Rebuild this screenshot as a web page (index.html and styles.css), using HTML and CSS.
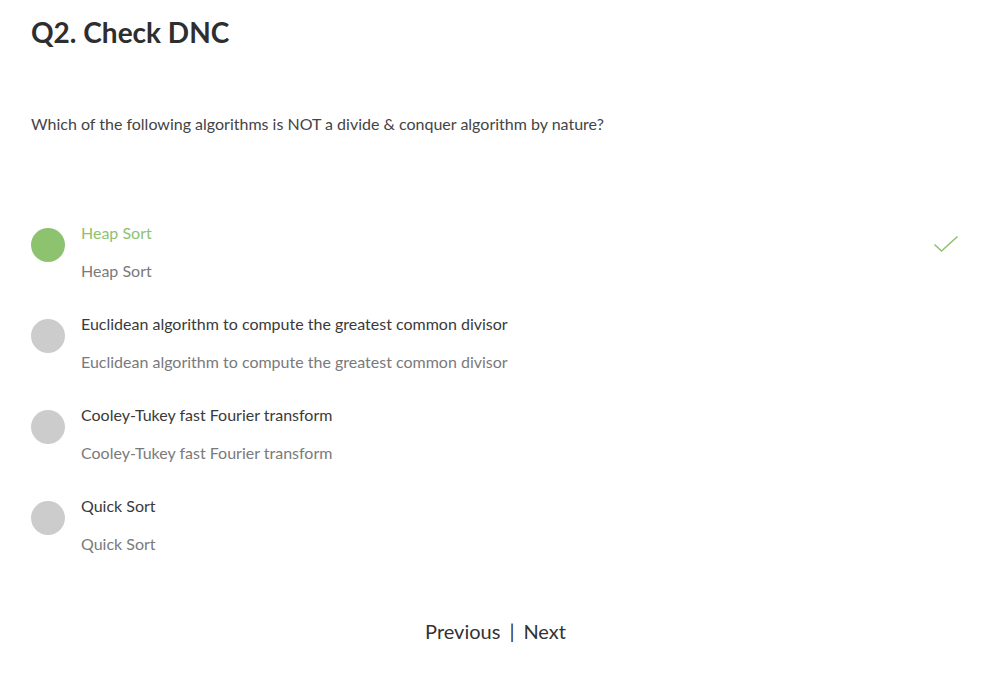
FILE: index.html
```html
<!DOCTYPE html>
<html>
<head>
<meta charset="utf-8">
<link rel="stylesheet" href="styles.css">
</head>
<body>
<div class="page">
  <h1 class="title">Q2. Check DNC</h1>
  <p class="question">Which of the following algorithms is NOT a divide &amp; conquer algorithm by nature?</p>
  <ul class="options">
    <li class="option correct">
      <span class="dot"></span>
      <div class="text">
        <div class="label">Heap Sort</div>
        <div class="sub">Heap Sort</div>
      </div>
      <svg class="check" width="26" height="18" viewBox="0 0 26 18"><path d="M1.5 9.5 L8.5 16 L24.5 1.5" fill="none" stroke="#8dc26f" stroke-width="1.6"/></svg>
    </li>
    <li class="option">
      <span class="dot"></span>
      <div class="text">
        <div class="label">Euclidean algorithm to compute the greatest common divisor</div>
        <div class="sub">Euclidean algorithm to compute the greatest common divisor</div>
      </div>
    </li>
    <li class="option">
      <span class="dot"></span>
      <div class="text">
        <div class="label">Cooley-Tukey fast Fourier transform</div>
        <div class="sub">Cooley-Tukey fast Fourier transform</div>
      </div>
    </li>
    <li class="option">
      <span class="dot"></span>
      <div class="text">
        <div class="label">Quick Sort</div>
        <div class="sub">Quick Sort</div>
      </div>
    </li>
  </ul>
  <div class="nav">
    <a class="nav-link">Previous</a>
    <span class="sep">|</span>
    <a class="nav-link">Next</a>
  </div>
</div>
</body>
</html>
```
FILE: styles.css
```css
html, body {
  margin: 0;
  padding: 0;
  background: #fff;
}
body {
  font-family: "Lato", "Open Sans", sans-serif;
  color: #333;
}
.page {
  padding: 14px 31px 0 31px;
}
.title {
  margin: 0;
  font-size: 28px;
  font-weight: 700;
  line-height: 36px;
  color: #2e2e2e;
}
.question {
  margin: 63px 0 0 0;
  font-size: 16px;
  line-height: 22px;
  color: #444;
}
.options {
  list-style: none;
  margin: 88px 0 0 0;
  padding: 0;
}
.option {
  display: flex;
  align-items: flex-start;
  height: 91px;
}
.dot {
  width: 34px;
  height: 34px;
  border-radius: 50%;
  background: #cccccc;
  margin-top: 5px;
  flex: none;
}
.correct .dot {
  background: #8dc26f;
}
.text {
  margin-left: 16px;
  flex: 1;
}
.label {
  font-size: 16px;
  line-height: 20px;
  color: #3a3a3a;
}
.correct .label {
  color: #8dc26f;
}
.sub {
  margin-top: 18px;
  font-size: 16px;
  line-height: 20px;
  color: #7a7a7a;
}
.check {
  margin-top: 12px;
  margin-right: 1px;
}
.nav {
  display: flex;
  justify-content: center;
  gap: 9px;
  margin-top: 30px;
  font-size: 20px;
  line-height: 28px;
  color: #333;
}
.nav-link {
  cursor: pointer;
}
```
